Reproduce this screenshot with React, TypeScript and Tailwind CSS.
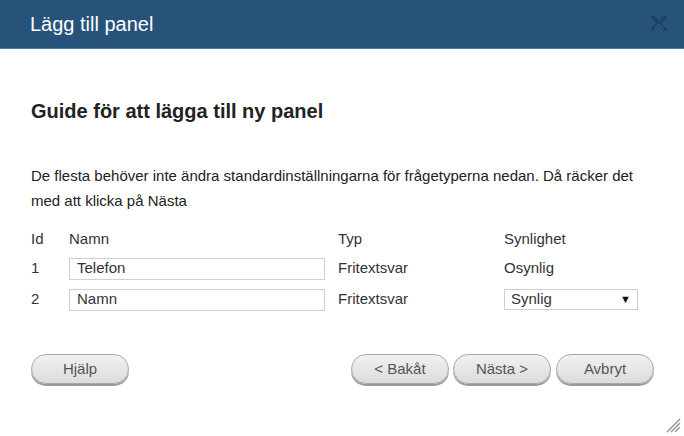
import React from 'react';

const rows = [
  { id: '1', name: 'Telefon', type: 'Fritextsvar', visibility: 'Osynlig', editable: false },
  { id: '2', name: 'Namn', type: 'Fritextsvar', visibility: 'Synlig', editable: true },
];

function PillButton({ label, className = '' }: { label: string; className?: string }) {
  return (
    <button
      className={`h-[30px] w-[98px] rounded-full border border-[#a9a9a9] bg-gradient-to-b from-[#f1f1f1] to-[#dcdcdc] text-[15px] text-[#555] shadow-[0_2px_0_#9a9a9a] ${className}`}
    >
      {label}
    </button>
  );
}

export default function App() {
  return (
    <div className="relative h-[436px] w-[684px] overflow-hidden bg-white font-['Liberation_Sans',Arial,sans-serif] text-[#333]">
      <div className="flex h-[49px] items-center justify-between border-b border-[#4f7699] bg-[#27527a] pl-[30px] pr-[17px]">
        <h1 className="text-[20px] text-white">Lägg till panel</h1>
        <svg width="16" height="16" viewBox="0 0 16 16" className="mt-[-2px]">
          <path d="M2 2 L14 14 M14 2 L2 14" stroke="#1d4163" strokeWidth="3.2" strokeLinecap="square" />
          <path d="M3 13.5 L8 9 L13 13.5" stroke="#3c6488" strokeWidth="1" fill="none" />
        </svg>
      </div>

      <div className="px-[31px]">
        <h2 className="mt-[50px] text-[20px] font-bold leading-[24px] text-[#222]">
          Guide för att lägga till ny panel
        </h2>
        <p className="mt-[40px] pr-[10px] text-[15px] leading-[25px] text-[#222]">
          De flesta behöver inte ändra standardinställningarna för frågetyperna nedan. Då räcker det med att klicka på Nästa
        </p>

        <div className="mt-[12px] text-[15px]">
          <div className="grid h-[28px] grid-cols-[38px_269px_166px_1fr] items-center">
            <span>Id</span>
            <span>Namn</span>
            <span>Typ</span>
            <span>Synlighet</span>
          </div>
          {rows.map((r) => (
            <div key={r.id} className="grid h-[31px] grid-cols-[38px_269px_166px_1fr] items-center">
              <span>{r.id}</span>
              <input
                readOnly
                value={r.name}
                className="h-[22px] w-[256px] border border-[#cfcfcf] px-[7px] text-[15px] text-[#333] outline-none"
              />
              <span>{r.type}</span>
              {r.editable ? (
                <div className="flex h-[21px] w-[134px] items-center justify-between border border-[#cfcfcf] pl-[6px] pr-[6px]">
                  <span>{r.visibility}</span>
                  <span className="text-[11px] text-[#111]">▼</span>
                </div>
              ) : (
                <span>{r.visibility}</span>
              )}
            </div>
          ))}
        </div>

        <div className="mt-[39px] flex items-center">
          <PillButton label="Hjälp" />
          <div className="ml-auto mr-[-1px] flex gap-[4px]">
            <PillButton label="< Bakåt" />
            <PillButton label="Nästa >" />
            <PillButton label="Avbryt" className="ml-[1px]" />
          </div>
        </div>
      </div>

      <svg width="16" height="16" viewBox="0 0 16 16" className="absolute bottom-[3px] right-[3px]">
        <path d="M15 2 L2 15 M15 6 L6 15 M15 10 L10 15" stroke="#8a8a8a" strokeWidth="1.2" />
      </svg>
    </div>
  );
}
